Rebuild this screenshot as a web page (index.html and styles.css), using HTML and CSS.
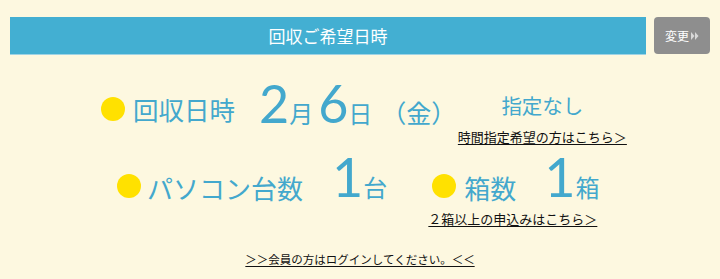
FILE: index.html
```html
<!DOCTYPE html>
<html lang="ja">
<head>
    <meta charset="UTF-8">
    <meta name="viewport" content="width=device-width, initial-scale=1.0">
    <title>回収ご希望日時</title>
    <link rel="stylesheet" href="styles.css">
</head>
<body>

    <div class="head">
        <h2 class="title">回収ご希望日時</h2>
        <a class="change" href="#">変更<svg width="8" height="10" viewBox="0 0 8 10"><path d="M0 1 L3.5 5 L0 9 Z M4 1 L7.5 5 L4 9 Z" fill="#d8d8d8"/></svg></a>
    </div>

    <div class="row row-date">
        <span class="dot"></span>
        <span class="label">回収日時</span>
        <span class="date"><b>2</b>月<b class="next">6</b>日<span class="week">（金）</span></span>
        <div class="time">
            <div class="none">指定なし</div>
            <a href="#">時間指定希望の方はこちら＞</a>
        </div>
    </div>

    <div class="row row-count">
        <div class="group">
            <span class="dot"></span>
            <span class="label">パソコン台数</span>
            <span class="count"><b>1</b>台</span>
        </div>
        <div class="box">
            <div class="group">
                <span class="dot"></span>
                <span class="label">箱数</span>
                <span class="count"><b>1</b>箱</span>
            </div>
            <a href="#">２箱以上の申込みはこちら＞</a>
        </div>
    </div>

    <p class="login"><a href="#">＞＞会員の方はログインしてください。＜＜</a></p>

</body>
</html>
```

FILE: styles.css
```css
body {
    margin: 0;
    background-color: #fdf8e0;
    font-family: "Noto Sans CJK JP", "Noto Sans", sans-serif;
    color: #43a8cd;
}
a {
    color: #111;
    text-decoration: underline;
    text-decoration-thickness: 1px;
    text-underline-offset: 2px;
}
.head {
    display: flex;
    gap: 8px;
    padding: 17px 10px 0 10px;
}
.title {
    width: 636px;
    height: 37px;
    margin: 0;
    background-color: #43afd2;
    box-shadow: 0 1px 0 #9fd3e4;
    color: #fff;
    font-size: 17px;
    font-weight: normal;
    line-height: 37px;
    text-align: center;
}
.change {
    display: flex;
    align-items: center;
    justify-content: center;
    gap: 2px;
    width: 56px;
    height: 37px;
    background-color: #8e8e8e;
    border-radius: 4px;
    color: #fff;
    font-size: 12px;
    text-decoration: none;
}
.row {
    display: flex;
    align-items: flex-start;
}
.dot {
    width: 24px;
    height: 24px;
    border-radius: 50%;
    background-color: #ffe100;
}
.label {
    line-height: 1;
}
b {
    font-family: Lato, sans-serif;
    font-weight: normal;
    line-height: 1;
}

.row-date {
    margin-top: 23px;
    padding-left: 101px;
}
.row-date .dot {
    margin-top: 20px;
}
.row-date .label {
    margin: 19px 0 0 8px;
    font-size: 25.5px;
}
.date {
    margin-left: 24px;
    font-size: 24px;
    line-height: 1;
}
.date b {
    font-size: 52px;
}
.date .next {
    margin-left: 5px;
}
.week {
    margin-left: 9px;
    font-size: 25px;
}
.time {
    width: 170px;
    margin: 18px 0 0 1px;
    text-align: center;
}
.none {
    font-size: 20.5px;
    line-height: 1;
}
.time a {
    display: block;
    margin-top: 14px;
    font-size: 13px;
    line-height: 1;
}

.row-count {
    margin-top: 7px;
    padding-left: 117px;
}
.group {
    display: flex;
    align-items: flex-start;
}
.row-count .dot {
    margin-top: 24px;
}
.row-count .label {
    margin: 25px 0 0 6px;
    font-size: 26px;
}
.count {
    margin-left: 29px;
    font-size: 24px;
    line-height: 1;
}
.count b {
    font-size: 54px;
}
.box {
    display: flex;
    flex-direction: column;
    align-items: center;
    margin-left: 41px;
}
.box .label {
    margin-left: 8px;
}
.box .count {
    margin-left: 28px;
}
.box a {
    margin: 8px 6px 0 0;
    font-size: 13px;
    line-height: 1;
}
.login {
    margin: 29px 0 0;
    padding-bottom: 6px;
    font-size: 11.5px;
    line-height: 1;
    text-align: center;
}
```
